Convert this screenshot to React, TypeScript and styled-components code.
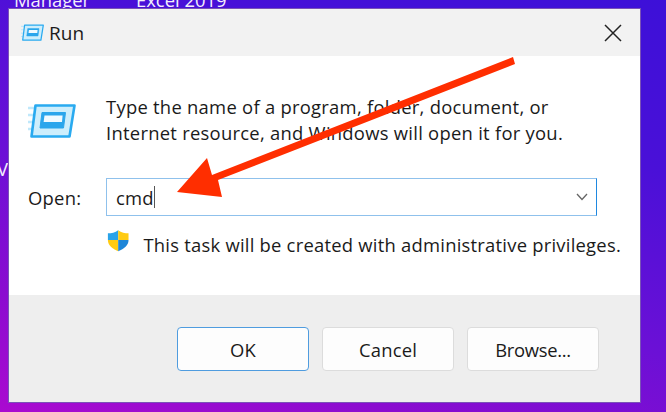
import React from "react";
import styled, { createGlobalStyle } from "styled-components";

const Global = createGlobalStyle`
  html, body { margin: 0; padding: 0; width: 666px; height: 412px; overflow: hidden; }
  body { font-family: "Open Sans", "Noto Sans", "Liberation Sans", sans-serif; }
`;

const Desktop = styled.div`
  position: relative;
  width: 666px;
  height: 412px;
  box-sizing: border-box;
  padding: 9px 26px 10px 9px;
  overflow: hidden;
  background: linear-gradient(197deg, #3d10d8 0%, #4a10d8 28%, #6c10d6 58%, #8a0cd0 80%, #aa0ad0 100%);
`;

const DesktopLabel = styled.span<{ $x: number; $y: number }>`
  position: absolute;
  left: ${(p) => p.$x}px;
  top: ${(p) => p.$y}px;
  font-size: 18.4px;
  line-height: 22px;
  color: #f4eefc;
  white-space: nowrap;
`;

const Dialog = styled.div`
  position: relative;
  z-index: 1;
  display: flex;
  flex-direction: column;
  width: 631px;
  height: 393px;
  background: #fff;
  box-shadow: 0 0 0 1px #7a52b8;
  color: #1a1a1a;
`;

const TitleBar = styled.div`
  display: flex;
  align-items: center;
  height: 47px;
  flex: none;
  padding: 0 18px 0 12px;
  gap: 4px;
  background: #f2f2f2;
`;

const Title = styled.span`
  flex: 1;
  font-size: 19px;
  color: #1c1c1c;
`;

const Body = styled.div`
  flex: 1;
  display: flex;
  flex-direction: column;
  padding: 38px 19px 0 19px;
`;

const Intro = styled.div`
  display: flex;
  height: 84px;
`;

const BigIconSlot = styled.div`
  width: 78px;
  padding-top: 9px;
  flex: none;
`;

const Message = styled.p`
  margin: 0;
  font-size: 18.4px;
  letter-spacing: 0.27px;
  line-height: 26px;
  color: #1a1a1a;
  white-space: nowrap;
`;

const OpenRow = styled.div`
  display: flex;
  align-items: center;
  height: 38px;
`;

const OpenLabel = styled.span`
  width: 78px;
  flex: none;
  font-size: 18.4px;
  letter-spacing: 0.27px;
  color: #1a1a1a;
`;

const ComboBox = styled.div`
  display: flex;
  align-items: center;
  justify-content: space-between;
  box-sizing: border-box;
  width: 491px;
  height: 38px;
  padding: 0 8px 0 9px;
  border: 1.5px solid #8fc1ec;
  border-right-color: #1f88e0;
  background: #fff;
`;

const InputText = styled.span`
  display: inline-flex;
  align-items: center;
  font-size: 18.4px;
  letter-spacing: 0.2px;
  color: #1a1a1a;
`;

const Caret = styled.span`
  display: inline-block;
  width: 1.5px;
  height: 22px;
  background: #555;
`;

const NoticeRow = styled.div`
  display: flex;
  align-items: flex-start;
  gap: 14px;
  margin: 12px 0 0 79px;
`;

const Notice = styled.span`
  margin-top: 4px;
  font-size: 18.4px;
  letter-spacing: 0.24px;
  line-height: 26px;
  color: #1a1a1a;
  white-space: nowrap;
`;

const Footer = styled.div`
  display: flex;
  justify-content: flex-end;
  gap: 13px;
  height: 107px;
  flex: none;
  box-sizing: border-box;
  padding: 32px 41px 0 0;
  background: #eeeeee;
`;

const Button = styled.button<{ $primary?: boolean; $tight?: boolean }>`
  width: 132px;
  height: 44px;
  padding: 1px 0 0;
  font: inherit;
  font-size: 18.4px;
  letter-spacing: ${(p) => (p.$tight ? "-0.3px" : "0.2px")};
  color: #1a1a1a;
  background: #fdfdfd;
  border-radius: 4px;
  border: ${(p) => (p.$primary ? "1.5px solid #4f9cdf" : "1px solid #dcdcdc")};
`;

const Arrow = styled.svg`
  position: absolute;
  left: 0;
  top: 0;
  z-index: 2;
  pointer-events: none;
`;

const RunIcon = ({ size }: { size: number }) => (
  <svg width={size} height={size * 0.72} viewBox="0 0 50 36" fill="none">
    <path d="M0 5h8M-1 12h7M-1 19h6M0 26h4" stroke="#bfe8fb" strokeWidth="2.4" />
    <path d="M7.5 2.5 H46.5 L41.5 33.5 H3.5 Z" fill="#cdeefc" stroke="#29aaf0" strokeWidth="2.6" strokeLinejoin="round" />
    <path d="M14 9.5 H37.5 L35.5 25 H12 Z" fill="#2ba6ec" stroke="#2ba6ec" strokeLinejoin="round" />
    <path d="M16.5 12.5 H34.6 L34 19 H15.6 Z" fill="#f0faff" />
  </svg>
);

const Shield = () => (
  <svg width="25" height="25" viewBox="0 0 25 25">
    <path d="M12.5 1 C9 3.5 5 4.5 1 4.5 V12 H12.5 Z" fill="#2aa3e8" />
    <path d="M12.5 1 C16 3.5 20 4.5 24 4.5 V12 H12.5 Z" fill="#ffcb12" />
    <path d="M1 12 C1 18 6 22 12.5 24.5 V12 Z" fill="#ffcb12" />
    <path d="M24 12 C24 18 19 22 12.5 24.5 V12 Z" fill="#1d86d8" />
  </svg>
);

export default function App() {
  return (
    <>
      <Global />
      <Desktop>
        <DesktopLabel $x={14} $y={-11}>Manager</DesktopLabel>
        <DesktopLabel $x={136} $y={-11}>Excel 2019</DesktopLabel>
        <DesktopLabel $x={-3} $y={158}>V</DesktopLabel>
        <Dialog>
          <TitleBar>
            <RunIcon size={24} />
            <Title>Run</Title>
            <svg width="18" height="18" viewBox="0 0 18 18" stroke="#222" strokeWidth="1.5">
              <path d="M1 1 L17 17 M17 1 L1 17" />
            </svg>
          </TitleBar>
          <Body>
            <Intro>
              <BigIconSlot>
                <RunIcon size={50} />
              </BigIconSlot>
              <Message>
                Type the name of a program, folder, document, or
                <br />
                Internet resource, and Windows will open it for you.
              </Message>
            </Intro>
            <OpenRow>
              <OpenLabel>Open:</OpenLabel>
              <ComboBox>
                <InputText>cmd<Caret /></InputText>
                <svg width="12" height="8" viewBox="0 0 12 8" fill="none" stroke="#666" strokeWidth="1.3">
                  <path d="M1 1 L6 6.5 L11 1" />
                </svg>
              </ComboBox>
            </OpenRow>
            <NoticeRow>
              <Shield />
              <Notice>This task will be created with administrative privileges.</Notice>
            </NoticeRow>
          </Body>
          <Footer>
            <Button $primary>OK</Button>
            <Button>Cancel</Button>
            <Button $tight>Browse...</Button>
          </Footer>
        </Dialog>
        <Arrow width="666" height="412" viewBox="0 0 666 412">
          <path d="M513 57 L515 64 L218 180 L222 197 L177 192 L207 158 L212 175 Z" fill="#ff2e00" />
        </Arrow>
      </Desktop>
    </>
  );
}
